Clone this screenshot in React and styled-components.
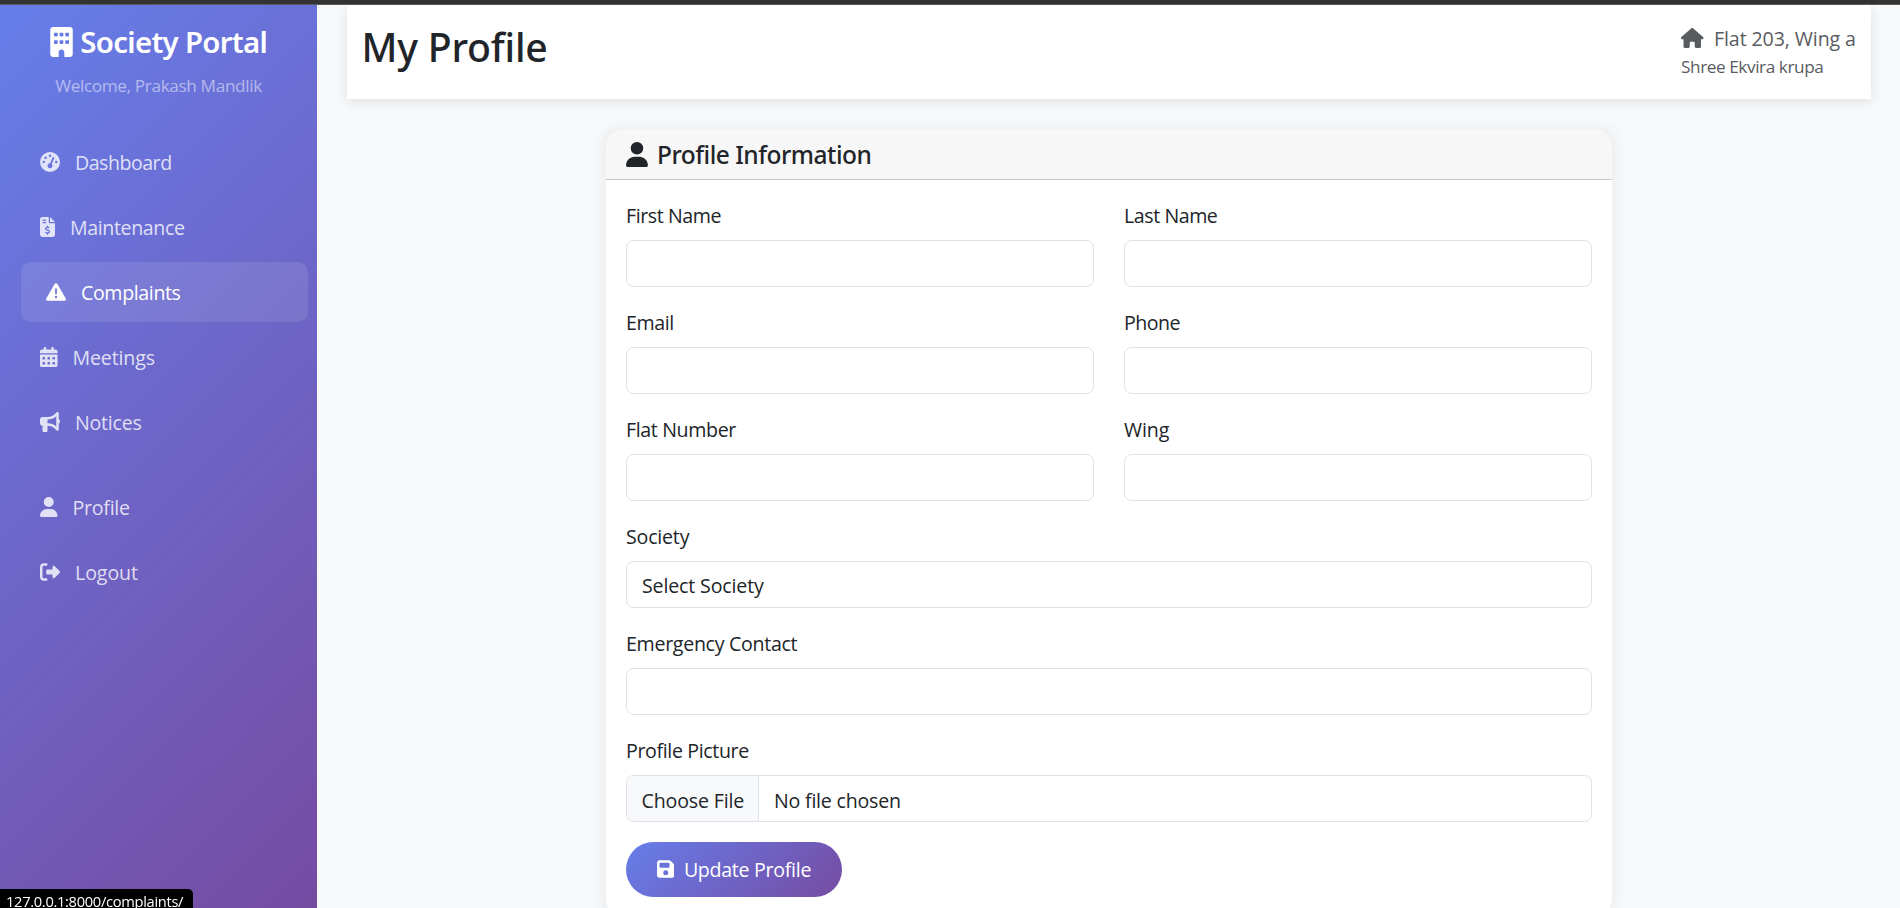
import React from "react";
import styled, { createGlobalStyle } from "styled-components";
import {
  FaBuilding,
  FaGaugeHigh,
  FaFileInvoiceDollar,
  FaTriangleExclamation,
  FaCalendarDays,
  FaBullhorn,
  FaUser,
  FaRightFromBracket,
  FaHouse,
  FaFloppyDisk,
} from "react-icons/fa6";

const brandGradient = "linear-gradient(135deg, #667eea 0%, #764ba2 100%)";
const bodyFont = `"Segoe UI", "Open Sans", "Noto Sans", sans-serif`;
const headingFont = `"Segoe UI", "Noto Sans", "Open Sans", sans-serif`;

const GlobalStyle = createGlobalStyle`
  *, *::before, *::after { box-sizing: border-box; }
  html, body { height: 100%; margin: 0; overflow: hidden; }
  body {
    background: #f8f9fb;
    color: #212529;
    font-family: ${bodyFont};
    font-size: 19.6px;
    line-height: 30px;
  }
  h1, h2, h3, p { margin: 0; }
  svg { vertical-align: -0.125em; }
`;

const Page = styled.div`
  display: flex;
  flex-direction: column;
  height: 908px;
  overflow: hidden;
`;

const TopEdge = styled.div`
  flex: none;
  height: 5px;
  background: #333;
  border-bottom: 1px solid #5c5c5c;
`;

const Shell = styled.div`
  display: flex;
  flex: 1;
  min-height: 0;
`;

const Sidebar = styled.aside`
  flex: none;
  width: 317px;
  background: ${brandGradient};
`;

const Brand = styled.div`
  height: 127px;
  padding-top: 19px;
  text-align: center;
  white-space: nowrap;
`;

const BrandTitle = styled.h3`
  color: #fff;
  font-family: ${headingFont};
  font-size: 29.4px;
  font-weight: 600;
  line-height: 36px;
  letter-spacing: -0.7px;

  svg {
    width: 23px;
    height: 30px;
    margin-right: 7.5px;
    vertical-align: -4px;
  }
`;

const Welcome = styled.p`
  margin-top: 13px;
  color: rgba(255, 255, 255, 0.5);
  font-size: 17.2px;
  line-height: 26px;
  letter-spacing: -0.36px;
`;

const Nav = styled.nav`
  padding: 0 15px;
`;

const NavGroup = styled.div`
  display: flex;
  flex-direction: column;
  gap: 5px;

  & + & { margin-top: 25px; }
`;

const NavLink = styled.a`
  height: 60px;
  padding: 16px 25px 14px;
  border-radius: 10px;
  color: ${(p) => (p.$active ? "#fff" : "rgba(255, 255, 255, 0.8)")};
  background: ${(p) => (p.$active ? "rgba(255, 255, 255, 0.1)" : "transparent")};
  transform: ${(p) => (p.$active ? "translateX(6px)" : "none")};
  letter-spacing: ${(p) => p.$track}px;
  white-space: nowrap;

  svg {
    width: ${(p) => p.$iconWidth}px;
    height: 20px;
    margin-right: 15px;
  }
`;

const Main = styled.main`
  flex: 1;
  padding: 0 29px 0 30px;
`;

const Header = styled.header`
  display: flex;
  justify-content: space-between;
  height: 94px;
  padding: 18px 15px 0 14.5px;
  background: #fff;
  box-shadow: 0 2.5px 12.5px rgba(0, 0, 0, 0.1);
`;

const PageTitle = styled.h1`
  font-family: ${headingFont};
  font-size: 39.2px;
  font-weight: 500;
  line-height: 48px;
  letter-spacing: -0.2px;
`;

const Residence = styled.div`
  width: 175px;
  padding-top: 1px;
  color: #595c5f;
  white-space: nowrap;
`;

const FlatLine = styled.div`
  letter-spacing: -0.1px;

  svg {
    width: 22.5px;
    height: 20px;
    margin-right: 10.5px;
  }
`;

const SocietyLine = styled.div`
  font-size: 17.2px;
  line-height: 26px;
  letter-spacing: -0.42px;
`;

const Card = styled.section`
  width: 1006px;
  height: 788px;
  margin: 30px auto 0 259px;
  border-radius: 8px 8px 18px 18px;
  background: linear-gradient(#f0f1f3 0 40px, #fff 40px);
  box-shadow: 0 2.5px 18px rgba(0, 0, 0, 0.08);
`;

const CardHeader = styled.div`
  height: 51px;
  padding: 11px 20px 0;
  border-bottom: 1px solid #c8c9ca;
  border-radius: 18px 18px 0 0;
  background: #f7f7f7;
`;

const CardTitle = styled.h2`
  font-family: ${headingFont};
  font-size: 24.5px;
  font-weight: 500;
  line-height: 30px;
  letter-spacing: -0.5px;

  svg {
    width: 22px;
    height: 25px;
    margin-right: 9px;
    vertical-align: -3px;
  }
`;

const Form = styled.form`
  display: grid;
  grid-template-columns: 1fr 1fr;
  gap: 20px 30px;
  padding: 20px;
`;

const Field = styled.div`
  grid-column: ${(p) => (p.$wide ? "1 / -1" : "auto")};
`;

const Label = styled.label`
  display: block;
  padding-top: 1px;
  margin-bottom: 9px;
  letter-spacing: ${(p) => p.$track}px;
`;

const control = `
  display: block;
  width: 100%;
  height: 47px;
  border: 1px solid #dee2e6;
  border-radius: 7.5px;
  background: #fff;
  color: #212529;
  font: inherit;
`;

const Input = styled.input`
  ${control}
  padding: 7px 15px;
`;

const Select = styled.select`
  ${control}
  padding: 8px 15px 6px;
  appearance: none;
  letter-spacing: -0.15px;
`;

const FilePicker = styled.div`
  ${control}
  display: flex;
  overflow: hidden;
  line-height: 49px;
`;

const FileButton = styled.span`
  width: 132px;
  padding-left: 14.5px;
  border-right: 1px solid #dee2e6;
  background: #f8f9fb;
  letter-spacing: -0.16px;
`;

const FileName = styled.span`
  padding-left: 15px;
  letter-spacing: -0.21px;
`;

const SubmitButton = styled.button`
  justify-self: start;
  width: 216px;
  height: 55px;
  padding: 0;
  border: 0;
  border-radius: 28px;
  background: ${brandGradient};
  color: #fff;
  font: inherit;
  line-height: 56px;
  letter-spacing: -0.29px;

  svg {
    width: 17.5px;
    height: 20px;
    margin-right: 9.5px;
  }
`;

const StatusBar = styled.div`
  position: fixed;
  left: 0;
  bottom: 0;
  width: 193px;
  height: 19px;
  padding-left: 6px;
  border-radius: 0 5px 0 0;
  background: #000;
  color: #fff;
  font-size: 14.7px;
  line-height: 24px;
  letter-spacing: -0.32px;
  white-space: nowrap;
`;

const primaryLinks = [
  { label: "Dashboard", icon: FaGaugeHigh, width: 20, track: -0.5 },
  { label: "Maintenance", icon: FaFileInvoiceDollar, width: 15, track: -0.38 },
  { label: "Complaints", icon: FaTriangleExclamation, width: 20, track: -0.38, active: true },
  { label: "Meetings", icon: FaCalendarDays, width: 17.5, track: -0.14 },
  { label: "Notices", icon: FaBullhorn, width: 20, track: -0.23 },
];

const accountLinks = [
  { label: "Profile", icon: FaUser, width: 17.5, track: -0.26 },
  { label: "Logout", icon: FaRightFromBracket, width: 20, track: -0.09 },
];

const textFields = [
  { label: "First Name", track: -0.43 },
  { label: "Last Name", track: -0.43 },
  { label: "Email", track: -0.4 },
  { label: "Phone", track: -0.5 },
  { label: "Flat Number", track: -0.36 },
  { label: "Wing", track: -0.1 },
];

function LinkList({ items }) {
  return (
    <NavGroup>
      {items.map(({ label, icon: Icon, width, track, active }) => (
        <NavLink key={label} $active={active} $iconWidth={width} $track={track}>
          <Icon />
          {label}
        </NavLink>
      ))}
    </NavGroup>
  );
}

export default function App() {
  return (
    <Page>
      <GlobalStyle />
      <TopEdge />
      <Shell>
        <Sidebar>
          <Brand>
            <BrandTitle>
              <FaBuilding />
              Society Portal
            </BrandTitle>
            <Welcome>Welcome, Prakash Mandlik</Welcome>
          </Brand>
          <Nav>
            <LinkList items={primaryLinks} />
            <LinkList items={accountLinks} />
          </Nav>
        </Sidebar>
        <Main>
          <Header>
            <PageTitle>My Profile</PageTitle>
            <Residence>
              <FlatLine>
                <FaHouse />
                Flat 203, Wing a
              </FlatLine>
              <SocietyLine>Shree Ekvira krupa</SocietyLine>
            </Residence>
          </Header>
          <Card>
            <CardHeader>
              <CardTitle>
                <FaUser />
                Profile Information
              </CardTitle>
            </CardHeader>
            <Form>
              {textFields.map(({ label, track }) => (
                <Field key={label}>
                  <Label $track={track}>{label}</Label>
                  <Input />
                </Field>
              ))}
              <Field $wide>
                <Label $track={-0.2}>Society</Label>
                <Select>
                  <option>Select Society</option>
                </Select>
              </Field>
              <Field $wide>
                <Label $track={-0.3}>Emergency Contact</Label>
                <Input />
              </Field>
              <Field $wide>
                <Label $track={-0.36}>Profile Picture</Label>
                <FilePicker>
                  <FileButton>Choose File</FileButton>
                  <FileName>No file chosen</FileName>
                </FilePicker>
              </Field>
              <SubmitButton type="button">
                <FaFloppyDisk />
                Update Profile
              </SubmitButton>
            </Form>
          </Card>
        </Main>
      </Shell>
      <StatusBar>127.0.0.1:8000/complaints/</StatusBar>
    </Page>
  );
}
